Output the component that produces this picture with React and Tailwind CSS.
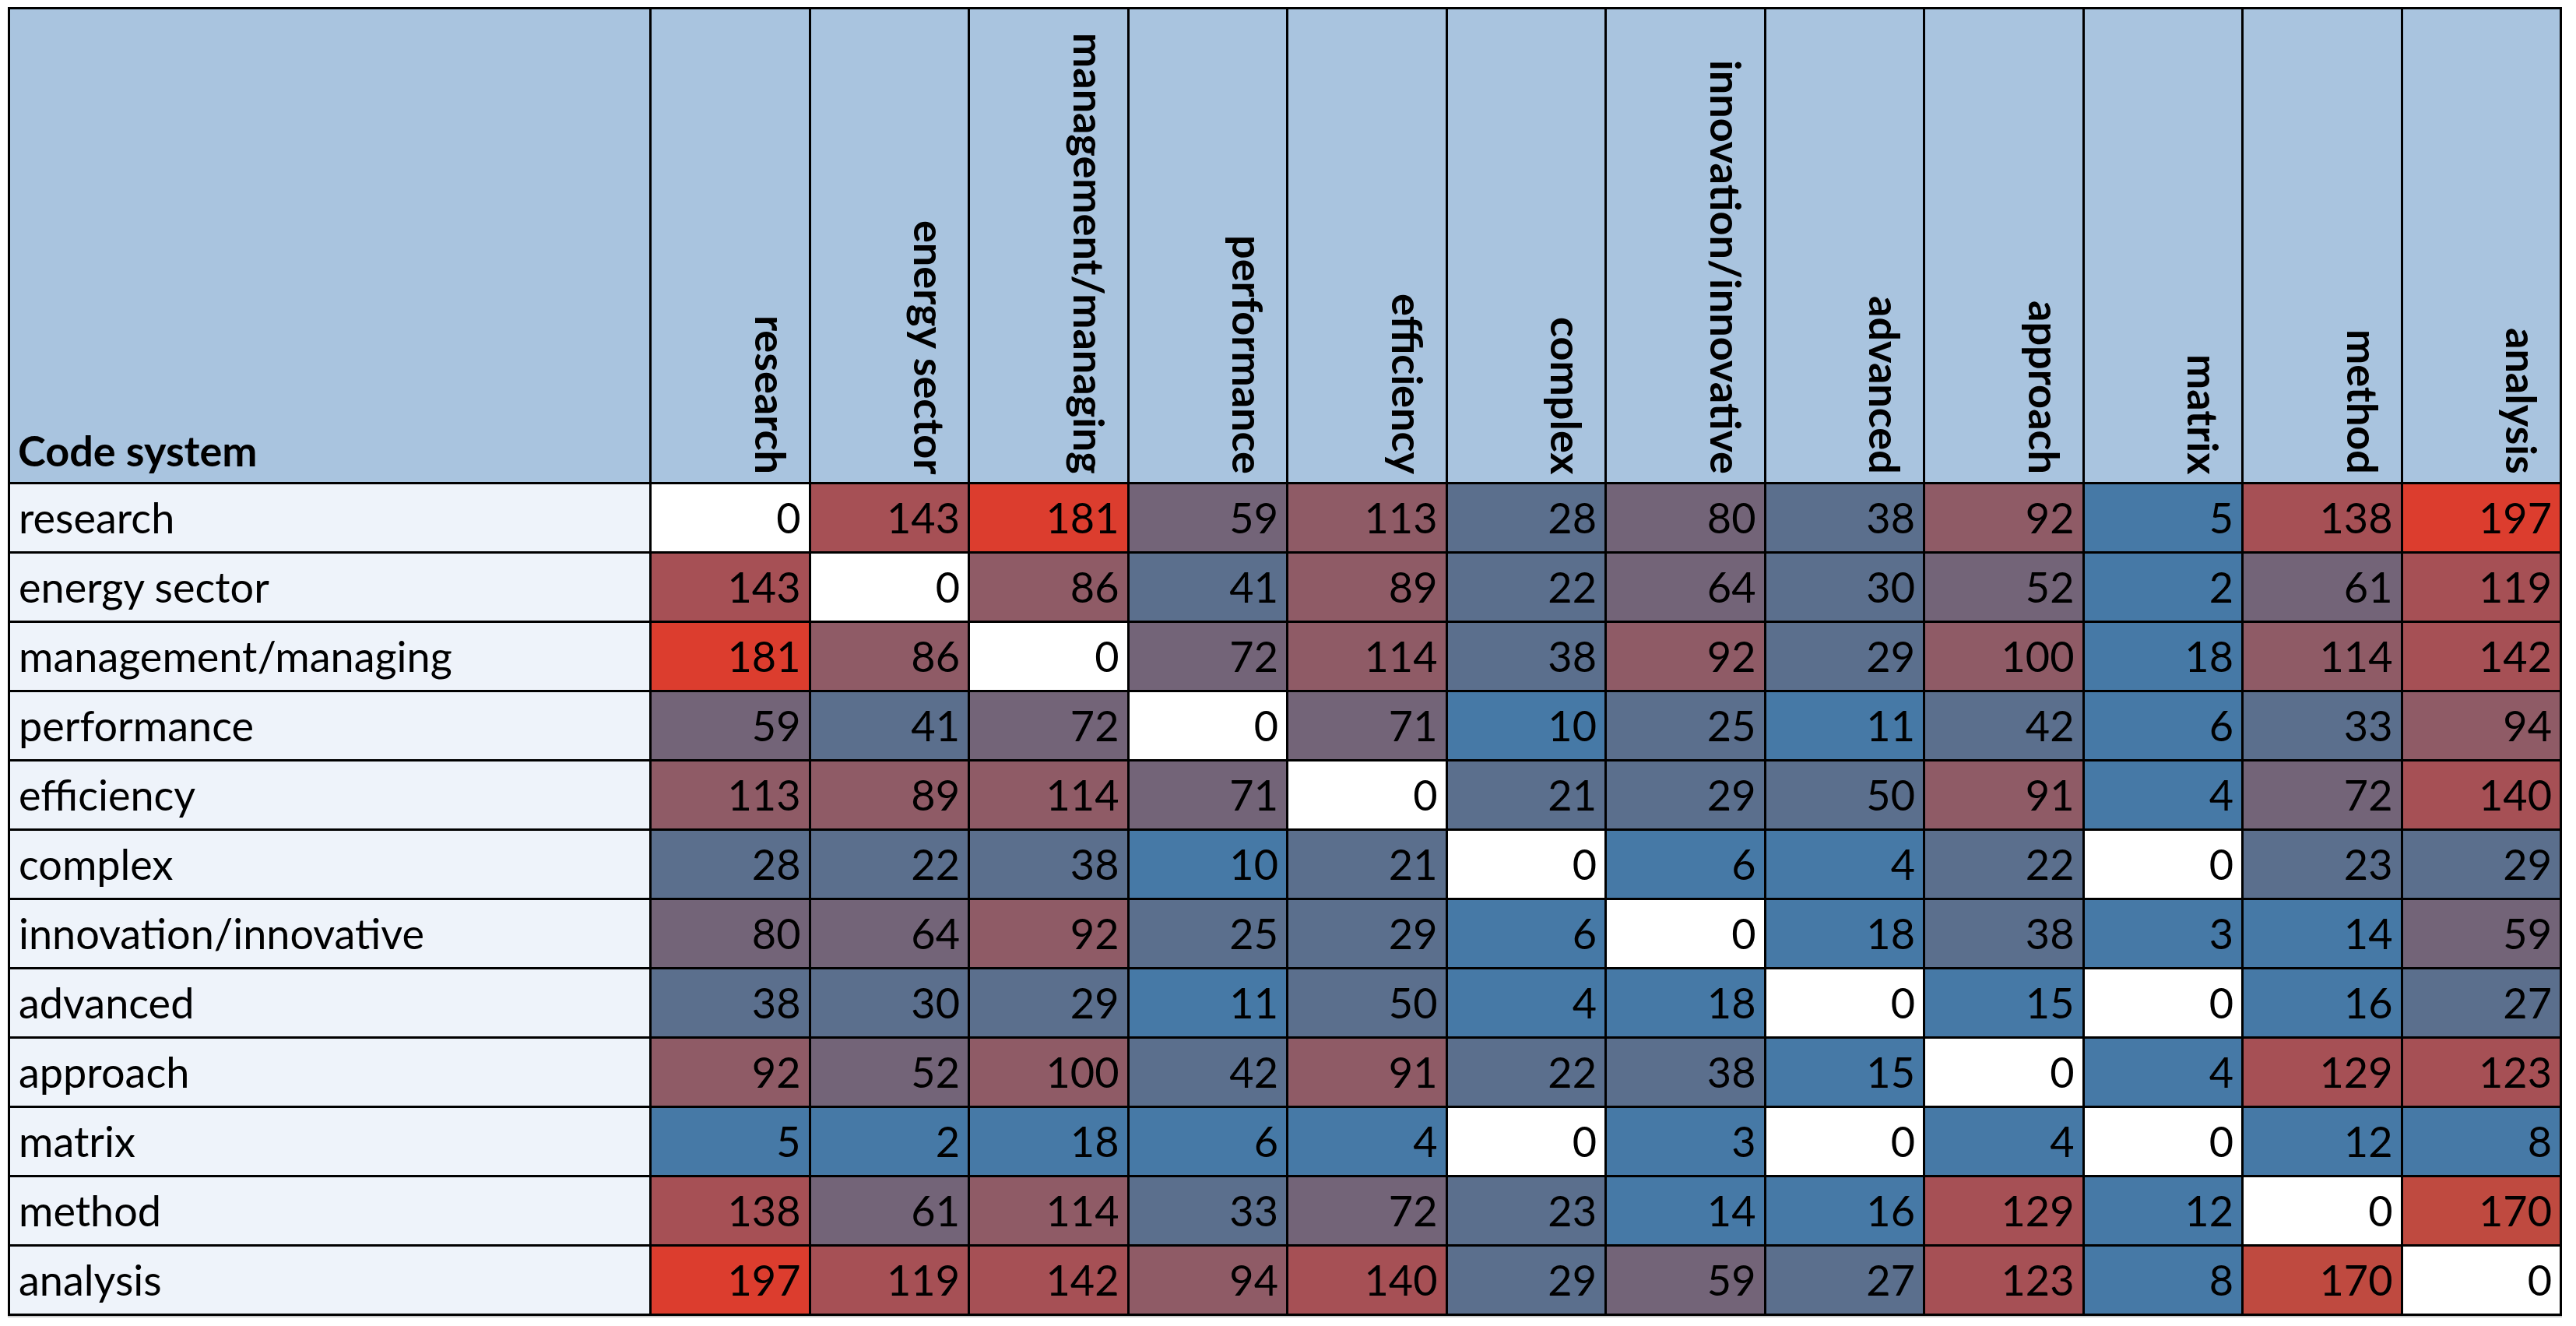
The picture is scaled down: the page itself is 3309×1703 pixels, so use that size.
import React from 'react';

// Code co-occurrence matrix, Excel-style heat map export.
const CODES = [
  'research',
  'energy sector',
  'management/managing',
  'performance',
  'efficiency',
  'complex',
  'innovation/innovative',
  'advanced',
  'approach',
  'matrix',
  'method',
  'analysis',
];

const MATRIX = [
  [0, 143, 181, 59, 113, 28, 80, 38, 92, 5, 138, 197],
  [143, 0, 86, 41, 89, 22, 64, 30, 52, 2, 61, 119],
  [181, 86, 0, 72, 114, 38, 92, 29, 100, 18, 114, 142],
  [59, 41, 72, 0, 71, 10, 25, 11, 42, 6, 33, 94],
  [113, 89, 114, 71, 0, 21, 29, 50, 91, 4, 72, 140],
  [28, 22, 38, 10, 21, 0, 6, 4, 22, 0, 23, 29],
  [80, 64, 92, 25, 29, 6, 0, 18, 38, 3, 14, 59],
  [38, 30, 29, 11, 50, 4, 18, 0, 15, 0, 16, 27],
  [92, 52, 100, 42, 91, 22, 38, 15, 0, 4, 129, 123],
  [5, 2, 18, 6, 4, 0, 3, 0, 4, 0, 12, 8],
  [138, 61, 114, 33, 72, 23, 14, 16, 129, 12, 0, 170],
  [197, 119, 142, 94, 140, 29, 59, 27, 123, 8, 170, 0],
];

// Bucketed blue -> red scale, same steps as the export.
function heat(v) {
  if (v === 0) return 'bg-white';
  if (v <= 18) return 'bg-[#4679a6]';
  if (v <= 50) return 'bg-[#5b6f8d]';
  if (v <= 80) return 'bg-[#736478]';
  if (v <= 116) return 'bg-[#8f5b66]';
  if (v <= 160) return 'bg-[#a65055]';
  if (v <= 175) return 'bg-[#bf4a40]';
  return 'bg-[#dc3d2e]';
}

export default function App() {
  return (
    <div className="min-h-screen bg-white pl-[10px] pt-[9px] font-['Lato','Liberation_Sans',sans-serif] text-[54px] leading-none text-black">
      <div className="grid w-[3281px] grid-cols-[821px_repeat(12,minmax(0,1fr))] gap-[3px] border-[3px] border-black bg-black shadow-[0_2px_0_#c8c8c8]">
        <div className="flex h-[607px] items-end bg-[#a9c4df] pb-[13px] pl-[10px] font-bold">
          Code system
        </div>
        {CODES.map((c) => (
          <div key={c} className="flex h-[607px] items-end justify-end bg-[#a9c4df] pb-[10px] pr-[22px]">
            <span className="font-bold [writing-mode:vertical-rl]">{c}</span>
          </div>
        ))}

        {CODES.map((c, i) => (
          <React.Fragment key={c}>
            <div className="flex h-[86px] items-center bg-[#eef3fa] pl-[11px]">{c}</div>
            {MATRIX[i].map((v, j) => (
              <div key={j} className={`flex h-[86px] items-center justify-end pr-[10px] ${heat(v)}`}>
                {v}
              </div>
            ))}
          </React.Fragment>
        ))}
      </div>
    </div>
  );
}
